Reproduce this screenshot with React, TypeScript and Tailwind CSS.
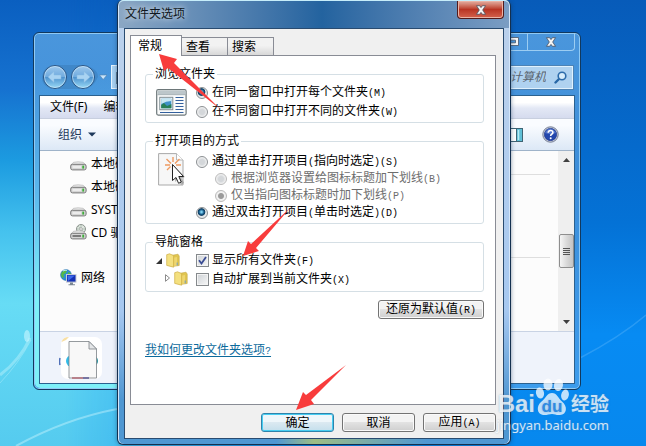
import { useState, type ReactNode } from "react"

const TABS = ["常规", "查看", "搜索"]
const DRIVES = ["本地磁盘", "本地磁盘", "SYSTEM", "CD 驱动器"]

// Latin letters and brackets take half the width of a Chinese character
function Label({ text }: { text: string }) {
  return (
    <span className="whitespace-nowrap">
      {text.split(/([()A-Z?]+)/).map((part, i) =>
        /^[()A-Z?]+$/.test(part) ? (
          <span key={i} className="font-['Liberation_Mono',monospace] text-[10px]">
            {part}
          </span>
        ) : (
          part
        )
      )}
    </span>
  )
}

function Wallpaper() {
  return (
    <svg className="absolute inset-0 size-full" viewBox="0 0 646 446" preserveAspectRatio="none" fill="none" aria-hidden="true">
      <path d="M0 375Q20 360 30 338" stroke="#d9fbff" strokeOpacity=".35" strokeWidth="3" />
      <path d="M0 383Q19 363 31 340" stroke="#d9fbff" strokeOpacity=".3" />
      <ellipse cx="27" cy="336" rx="3" ry="6" fill="#c9f6ff" fillOpacity=".6" />
      <path d="M16 446Q65 419 117 409" stroke="#d9fbff" strokeOpacity=".4" strokeWidth="2" />
      <path d="M580 358Q620 337 646 315" stroke="#8fd0ff" strokeOpacity=".25" strokeWidth="1.5" />
    </svg>
  )
}

function CloseMark() {
  return (
    <svg width="12" height="10" viewBox="0 0 12 10" aria-hidden="true">
      <path
        d="M1.5 .7H4.6L6 2.6L7.4.7H10.5L7.7 5L10.5 9.3H7.4L6 7.4L4.6 9.3H1.5L4.3 5Z"
        fill="#f5f5f5"
        stroke="#4a5060"
        strokeWidth=".8"
      />
    </svg>
  )
}

function DriveIcon({ cd }: { cd?: boolean }) {
  return (
    <svg width="17" height="17" viewBox="0 0 17 17" aria-hidden="true">
      {cd && (
        <>
          <circle cx="11" cy="5" r="4.5" fill="#dfe6df" stroke="#8d948f" />
          <path d="M11 .8V9M7 5H15M8 2L14 8" stroke="#a2b5a6" strokeWidth=".7" />
          <circle cx="11" cy="5" r="1.3" fill="#fff" stroke="#888" strokeWidth=".6" />
        </>
      )}
      <path d="M3.5 7.3Q8 6.3 13 7.3L16 10H.8Z" fill="#e9e9e9" stroke="#aaa" strokeWidth=".6" />
      <rect x=".7" y="9.3" width="15.4" height="5.6" rx="1.8" fill="#d5d5d5" stroke="#777" />
      <path d="M2.5 12H11" stroke={cd ? "#555" : "#f6f6f6"} strokeWidth="1.4" />
      <rect x="12.3" y="10.6" width="1.8" height="3" fill="#3fae3a" />
    </svg>
  )
}

function NetworkIcon() {
  return (
    <svg width="17" height="17" viewBox="0 0 17 17" aria-hidden="true">
      <circle cx="6" cy="6" r="5.4" fill="#2d8fd4" stroke="#1c66a5" strokeWidth=".6" />
      <path d="M2 3Q5 0 7 1.5L6 4L3.5 5.5L4 8L2.5 9Q0 6 2 3ZM8 3L11 4.5V7H8Z" fill="#56b944" />
      <path d="M3 2Q5 .7 7 1.3" stroke="#cdefff" fill="none" />
      <rect x="6.5" y="5.5" width="9.5" height="7.6" fill="#1431b4" stroke="#c8ccd4" />
      <path d="M7.5 6.5H15L8 12Z" fill="#3d68ea" />
      <path d="M10 13.5H13V15.3H15V16.3H8.5V15.3H10Z" fill="#7c8794" />
    </svg>
  )
}

function LayoutIcon() {
  return (
    <svg width="31" height="27" viewBox="0 0 31 27" aria-hidden="true">
      <rect x=".7" y=".7" width="29.4" height="25.4" rx="1.5" fill="#fbfcfc" stroke="#6d7779" strokeWidth="1.2" />
      <rect x="1.5" y="1.5" width="28" height="4" fill="#bcc6ca" />
      <path d="M1.5 5.7H29.5" stroke="#8d999e" strokeWidth=".7" />
      <rect x="3.8" y="8.3" width="13" height="12.4" fill="#fff" stroke="#7c8b91" />
      <rect x="5.2" y="9.7" width="10.2" height="9.6" fill="#3f91c8" />
      <path d="M5.2 9.7H15.4V12Q10 12 5.2 15Z" fill="#c7e7f2" />
      <path d="M5.2 16L8 14L11 17L15.4 15V19.3H5.2Z" fill="#277f55" />
      <path d="M19.5 8.5H27.5M19.5 11.5H27.5M19.5 14.5H27.5M19.5 17.5H27.5M19.5 20.5H27.5M4 23.5H27.5" stroke="#33609d" />
    </svg>
  )
}

function ClickIcon() {
  return (
    <svg width="28" height="33" viewBox="0 0 28 33" aria-hidden="true">
      <path d="M.6.6H18.5L25 7V32H.6Z" fill="#f7f7f7" stroke="#a9a9a9" />
      <path d="M18.5.6V7H25" fill="#fff" stroke="#b7b7b7" />
      <g stroke="#ee9b62" strokeWidth="1.4">
        <path d="M15 4V9M8.5 6L13 10.5M21.5 6L17 10.5M7 12H12M18 12H23M9 17L12.5 13.5" />
      </g>
      <path d="M17 14L27 24L23.5 25L26 30L23 32L20 26L17 29Z" fill="#777" fillOpacity=".5" />
      <path d="M14.5 11.5V27.5L18 24.5L20.6 30.3L23.3 29L20.8 23.5H25.5Z" fill="#fff" stroke="#222" />
    </svg>
  )
}

function FolderIcon() {
  return (
    <svg width="14" height="15" viewBox="0 0 14 15" aria-hidden="true">
      <path d="M5 2.5L12 1.2L13.2 3V12.5L6 13.5Z" fill="#e0c550" stroke="#c5a843" strokeWidth=".6" />
      <path d="M.7 1.7L3.5.8L7.6 2.6V14.2L.7 12.4Z" fill="#f4e07f" stroke="#cfae43" strokeWidth=".7" />
      <path d="M8.2 4.5L11 4V12.4L8.2 13Z" fill="#eed670" />
      <path d="M11.2 9.5V12.3" stroke="#6f9fc4" />
    </svg>
  )
}

function Group({ title, icon, className, children }: { title: string; icon: ReactNode; className: string; children: ReactNode }) {
  return (
    <fieldset className="min-w-0 rounded-[3px] border border-[#d5dfe5] pl-[10px]">
      <legend className="-ml-[3px] h-4 px-[2px] leading-4">{title}</legend>
      <div className={`flex ${className}`}>
        <div className="w-10 shrink-0">{icon}</div>
        <div className="min-w-0 flex-1">{children}</div>
      </div>
    </fieldset>
  )
}

type RadioProps = { name: string; text: string; checked: boolean; onChange?: () => void; disabled?: boolean; className: string }

function Radio({ name, text, checked, onChange, disabled, className }: RadioProps) {
  return (
    <label className={`flex items-center gap-1 ${className}`}>
      <input
        type="radio"
        name={name}
        checked={checked}
        disabled={disabled}
        onChange={onChange}
        className="size-3 shrink-0 appearance-none rounded-full border border-[#8b8f92] bg-[radial-gradient(circle,#d4d7da_35%,#f8f8f8_75%)] checked:bg-[radial-gradient(circle_at_45%_40%,#7fd0f2_8%,#155a88_30%,#123f63_42%,#e4e8ea_52%)] disabled:border-[#b9b9b9] disabled:checked:bg-[radial-gradient(circle,#9a9a9a_35%,#f0f0f0_50%)]"
      />
      <Label text={text} />
    </label>
  )
}

function Checkbox({ text, checked, onChange }: { text: string; checked: boolean; onChange: () => void }) {
  return (
    <label className="flex h-[19px] items-center gap-[3px]">
      <span className="grid shrink-0 place-items-center *:[grid-area:1/1]">
        <input
          type="checkbox"
          checked={checked}
          onChange={onChange}
          className="size-[13px] appearance-none border border-[#85898c] bg-linear-to-br from-[#cdd1d5] to-[#f8f8f8] shadow-[inset_0_0_0_1px_#f4f4f4]"
        />
        {checked && (
          <svg width="9" height="9" viewBox="0 0 9 9" fill="none" className="pointer-events-none" aria-hidden="true">
            <path d="M1 4.2L3.5 7.5L8 1" stroke="#3a4c94" strokeWidth="1.8" />
          </svg>
        )}
      </span>
      <Label text={text} />
    </label>
  )
}

function DialogButton({ text, primary, className }: { text: string; primary?: boolean; className: string }) {
  return (
    <button
      type="button"
      className={`flex h-[19px] items-center justify-center rounded-[3px] border bg-linear-to-b ${
        primary
          ? "border-[#2f83ab] from-[#eef6fa] from-45% via-[#dbe9f1] via-50% to-[#c4dfec] shadow-[inset_0_0_0_1px_#46cdf2]"
          : "border-[#737373] from-[#f3f3f3] from-45% via-[#e2e2e2] via-50% to-[#cfcfcf] shadow-[inset_0_0_0_1px_#fafafa]"
      } ${className}`}
    >
      <Label text={text} />
    </button>
  )
}

function ExplorerWindow() {
  return (
    <section
      aria-label="计算机"
      className="absolute top-8 right-[65px] left-[33px] rounded-[6px] border border-[#12395e] bg-linear-to-b from-[#4a96dc] via-[#3d8ed9] via-40% to-[#3d9cec] pb-[5px] shadow-[inset_0_0_0_1px_#8fcaf5]"
    >
      <div className="absolute inset-y-px left-px w-[90px] rounded-[5px] bg-linear-to-b from-transparent from-10% via-[#5cb8ec] via-45% to-[#7df0f8] to-75%" />
      <div className="relative">
        <div className="mr-[5px] flex h-[18px] justify-end text-white">
          <button type="button" aria-label="最大化" className="flex w-12 items-center justify-end rounded-bl border-b border-l border-[#9ccdf2] pr-2">
            <svg width="12" height="9" viewBox="0 0 12 9" aria-hidden="true">
              <path d="M.5.5H11.5V8.5H.5ZM3.5 3.2V5.8H8.5V3.2Z" fill="#f5f5f5" fillRule="evenodd" stroke="#455468" strokeWidth=".8" />
            </svg>
          </button>
          <button type="button" aria-label="关闭" className="grid w-12 place-items-center rounded-br border-r border-b border-l border-[#9ccdf2]">
            <CloseMark />
          </button>
        </div>
        <div className="mx-[7px] mt-[13px] mb-[5px] flex h-[26px] items-center">
          <svg width="66" height="26" viewBox="0 0 66 26" className="shrink-0" aria-hidden="true">
            <defs>
              <linearGradient id="nav" x1="0" y1="0" x2="0" y2="1">
                <stop offset="0" stopColor="#9fc9ed" />
                <stop offset=".48" stopColor="#70abdf" />
                <stop offset=".52" stopColor="#4e93cf" />
                <stop offset="1" stopColor="#9cdcf7" />
              </linearGradient>
            </defs>
            <path d="M14 1H42Q57 4 57 13Q52 25 42 25H14Q1 24 1 13Q2 2 14 1" fill="#356fa6" fillOpacity=".35" />
            {[14, 42].map((cx) => (
              <g key={cx}>
                <circle cx={cx} cy="13" r="11.5" fill="url(#nav)" stroke="#2a5585" />
                <circle cx={cx} cy="13" r="10.5" fill="none" stroke="#d5edfb" strokeOpacity=".6" />
              </g>
            ))}
            <path d="M7 13L13 7.5V11H20V15H13V18.5ZM49 13L43 7.5V11H36V15H43V18.5Z" fill="#a9d3f2" stroke="#86b8e2" strokeWidth=".5" />
            <path d="M58.5 11H66L62.2 15.5Z" fill="#c9e5fa" stroke="#527fac" strokeWidth=".6" />
          </svg>
          <div className="ml-1 h-6 flex-1 border border-[#e6f3fc] bg-[#a9d2f2] px-1 py-[6px]">
            <div className="h-3 w-3 border border-[#657f90] bg-[#cfdcaa]" />
          </div>
          <div className="ml-2 flex h-[23px] w-[130px] items-center gap-2 border border-[#e0f1fd] bg-[#afd2f0] pr-[5px] shadow-[0_0_0_1px_#4d83b5]">
            <input
              type="text"
              aria-label="搜索 计算机"
              placeholder="搜索 计算机"
              className="min-w-0 flex-1 bg-transparent text-right text-xs text-[#53636f] italic outline-none placeholder:text-[#5b6670]"
            />
            <svg width="13" height="13" viewBox="0 0 13 13" fill="none" className="shrink-0" aria-hidden="true">
              <path d="M5.5 7.5L1.5 11.5" stroke="#2767a6" strokeWidth="2.4" strokeLinecap="round" />
              <circle cx="8" cy="5" r="3.8" fill="#d8edfb" stroke="#2d6cab" strokeWidth="1.6" />
            </svg>
          </div>
        </div>
        <div className="mx-[5px] border border-[#2b618f] bg-[#fcfcfc]">
          <div className="flex h-[22px] items-center gap-4 bg-linear-to-b from-white from-30% via-[#e3e8f5] via-55% to-[#d5dbee] pl-[10px]">
            <button type="button">文件(F)</button>
            <button type="button">编辑(E)</button>
          </div>
          <div className="flex h-[33px] items-center border-y border-t-[#c8cfdf] border-b-[#9fb3c9] bg-linear-to-b from-[#fafcff] from-20% to-[#dce8f6] pr-[15px] pl-[18px] text-[#1e395b]">
            <button type="button" className="flex items-center gap-[6px]">
              组织
              <svg width="8" height="5" viewBox="0 0 8 5" aria-hidden="true">
                <path d="M0 .5H8L4 4.5Z" fill="#1e395b" />
              </svg>
            </button>
            <svg width="20" height="14" viewBox="0 0 20 14" className="mr-[19px] ml-auto" aria-hidden="true">
              <rect x=".5" y=".5" width="19" height="13" fill="#fff" stroke="#3f6474" />
              <rect x="13.5" y=".5" width="6" height="13" fill="#5fbfd6" stroke="#3f6474" />
              <path d="M15.5 2V12" stroke="#b7ecf4" strokeWidth="1.5" />
            </svg>
            <svg width="17" height="17" viewBox="0 0 17 17" aria-hidden="true">
              <circle cx="8.5" cy="8.5" r="7.7" fill="#dadde5" stroke="#717b93" />
              <circle cx="8.5" cy="8.5" r="6.2" fill="#2347ad" stroke="#182f7d" strokeWidth=".6" />
              <path d="M3 7Q5 2 8.5 2.5T14 7Q8 9 3 7Z" fill="#6f91df" fillOpacity=".6" />
              <path d="M6.2 6.8Q6.3 4.5 8.6 4.5T10.9 6.5Q10.9 7.6 9.6 8.3Q8.7 8.8 8.7 9.9" fill="none" stroke="#fff" strokeWidth="1.6" />
              <circle cx="8.7" cy="12.2" r="1" fill="#fff" />
            </svg>
          </div>
          <div className="flex h-[180px]">
            <ul className="w-40 shrink-0 pt-px">
              {DRIVES.map((name, i) => (
                <li key={i} className="flex h-[23px] items-center gap-1 pl-[30px] whitespace-nowrap">
                  <DriveIcon cd={name.startsWith("CD")} />
                  {name}
                </li>
              ))}
              <li className="mt-[22px] flex h-[23px] items-center gap-1 pl-5">
                <NetworkIcon />
                网络
              </li>
            </ul>
            <div className="mr-2 flex-1">
              <div className="mt-[23px] border-t border-[#dedede]" />
              <div className="mt-[82px] border-t border-[#dedede]" />
            </div>
            <div className="flex w-4 flex-col items-center bg-[#efefef] py-[7px]">
              <svg width="7" height="4" viewBox="0 0 7 4" aria-hidden="true">
                <path d="M3.5 0L7 4H0Z" fill="#3f3f3f" />
              </svg>
              <div className="mt-[72px] flex h-[34px] w-[15px] flex-col items-center justify-center gap-px rounded-[2px] border border-[#8e8e8e] bg-linear-to-r from-[#f6f6f6] via-[#dadada] to-[#c3c3c3]">
                <div className="h-px w-[7px] bg-[#555]" />
                <div className="h-px w-[7px] bg-[#555]" />
                <div className="h-px w-[7px] bg-[#555]" />
                <div className="h-px w-[7px] bg-[#555]" />
              </div>
              <svg width="7" height="4" viewBox="0 0 7 4" className="mt-auto" aria-hidden="true">
                <path d="M3.5 4L0 0H7Z" fill="#3f3f3f" />
              </svg>
            </div>
          </div>
          <div className="h-[52px] border-t border-[#c9d3e4] bg-[#eff3fb] pt-1 pl-[19px]">
            <svg width="46" height="44" viewBox="0 0 46 44" aria-hidden="true">
              <rect x="2" y="1" width="41" height="42" rx="7" fill="#fff" />
              <path d="M2.5 6Q4 1 10 1L7 4Z" fill="#f8dfa2" />
              <path d="M1 22Q0 26 1 29" stroke="#5070b8" strokeWidth="1.5" fill="none" />
              <circle cx="13" cy="25" r="6" fill="#2fbce9" />
              <circle cx="33" cy="25" r="6" fill="#258f9d" />
              <path d="M10 5.5H30L37.5 13V42H10Z" fill="#f8f8f8" stroke="#7b8186" strokeWidth=".8" />
              <path d="M30 5.5V13H37.5Z" fill="#e4e6e8" stroke="#7b8186" strokeWidth=".8" />
              <path d="M13 42H30" stroke="#a73848" />
              <path d="M24 42H30" stroke="#3568b8" />
            </svg>
          </div>
        </div>
      </div>
    </section>
  )
}

function FolderOptionsDialog() {
  const [tab, setTab] = useState(0)
  const [browse, setBrowse] = useState(0)
  const [click, setClick] = useState(1)
  const [showAll, setShowAll] = useState(true)
  const [expand, setExpand] = useState(false)

  return (
    <section
      role="dialog"
      aria-label="文件夹选项"
      className="absolute top-0 right-[135px] left-[117px] rounded-[6px] border-x border-b border-[#14304f] bg-linear-to-b from-[#b9d0ec] from-15% via-[#a6c8f0] via-70% to-[#4f97d2] to-90% px-[6px] pb-[5px] shadow-[inset_0_1px_0_#c9e8f5,inset_1px_0_0_#d4e6fa,inset_-1px_0_0_#d4e6fa,0_0_4px_#10305080]"
    >
      {/* Wallpaper colours showing through the glass under the buttons */}
      <div className="absolute inset-x-2 bottom-0 h-[5px] bg-linear-to-r from-transparent from-40% via-[#9dbd84] via-50% to-transparent to-80%" />
      <div className="-mx-[5px] flex h-7 items-start justify-between rounded-t-[5px] border-t border-[#c6edfa] bg-linear-to-r from-[#8ba7c4] via-[#23639f] via-52% to-[#7b9dc3] pr-[5px] pl-[6px]">
        <h1 className="text-xs leading-[26px] text-[#101820] [text-shadow:0_0_6px_#fff]">文件夹选项</h1>
        <button
          type="button"
          aria-label="关闭"
          className="grid h-[18px] w-[47px] place-items-center rounded-b-[4px] border border-t-0 border-[#521b1b] bg-linear-to-b from-[#dc9a8c] from-10% via-[#b83423] via-50% to-[#d4614c] shadow-[inset_0_0_0_1px_#eab3a5]"
        >
          <CloseMark />
        </button>
      </div>
      <div className="relative border border-[#294b70] bg-[#f0f0f0] pt-[6px] pr-[7px] pb-[6px] pl-[5px]">
        <div role="tablist" className="relative -mb-px flex items-end">
          {TABS.map((name, i) => (
            <button
              key={name}
              type="button"
              role="tab"
              aria-selected={tab === i}
              onClick={() => setTab(i)}
              className={
                tab === i
                  ? "h-[21px] w-[52px] border border-b-0 border-[#898c95] bg-white pl-[7px] text-left"
                  : "mb-px h-[18px] w-[46px] border border-b-0 border-l-0 border-[#898c95] bg-linear-to-b from-[#f2f2f2] from-45% to-[#d8d8d8] pt-px pl-[4px] text-left leading-4"
              }
            >
              {name}
            </button>
          ))}
        </div>
        <div className="border border-[#898c95] bg-white pt-[10px] pr-[11px] pb-[46px] pl-[14px]">
          <div className="flex flex-col gap-[10px]">
            <Group title="浏览文件夹" className="pt-px pb-px" icon={<div className="pt-[6px]"><LayoutIcon /></div>}>
              {["在同一窗口中打开每个文件夹(M)", "在不同窗口中打开不同的文件夹(W)"].map((text, i) => (
                <Radio key={text} name="browse" text={text} checked={browse === i} onChange={() => setBrowse(i)} className="h-[19px]" />
              ))}
            </Group>
            <Group title="打开项目的方式" className="pt-1 pb-[2px]" icon={<div className="pl-[2px]"><ClickIcon /></div>}>
              <Radio name="click" text="通过单击打开项目(指向时选定)(S)" checked={click === 0} onChange={() => setClick(0)} className="h-[17px]" />
              <Radio name="underline" text="根据浏览器设置给图标标题加下划线(B)" checked={false} disabled className="ml-[19px] h-[17px] text-[#6d6d6d]" />
              <Radio name="underline" text="仅当指向图标标题时加下划线(P)" checked disabled className="ml-[19px] h-[17px] text-[#6d6d6d]" />
              <Radio name="click" text="通过双击打开项目(单击时选定)(D)" checked={click === 1} onChange={() => setClick(1)} className="h-[17px]" />
            </Group>
            <Group
              title="导航窗格"
              className="pt-px pb-[2px]"
              icon={
                <>
                  <div className="flex h-[19px] items-center gap-1">
                    <svg width="6" height="6" viewBox="0 0 6 6" aria-hidden="true">
                      <path d="M6 0V6H0Z" fill="#333" />
                    </svg>
                    <FolderIcon />
                  </div>
                  <div className="flex h-4 items-center gap-1 pl-[9px]">
                    <svg width="5" height="8" viewBox="0 0 5 8" aria-hidden="true">
                      <path d="M.5.7V7.3L4.5 4Z" fill="#fff" stroke="#8b8b8b" />
                    </svg>
                    <FolderIcon />
                  </div>
                </>
              }
            >
              <Checkbox text="显示所有文件夹(F)" checked={showAll} onChange={() => setShowAll(!showAll)} />
              <Checkbox text="自动扩展到当前文件夹(X)" checked={expand} onChange={() => setExpand(!expand)} />
            </Group>
          </div>
          <div className="mt-2 flex justify-end">
            <DialogButton text="还原为默认值(R)" className="w-[106px]" />
          </div>
          <a href="#help" className="mt-[23px] block h-4 w-fit leading-4 text-[#0b6a9c] underline underline-offset-2">
            <Label text="我如何更改文件夹选项?" />
          </a>
        </div>
        <div className="flex justify-end gap-2 pt-2">
          <DialogButton text="确定" primary className="w-[73px]" />
          <DialogButton text="取消" className="w-[73px]" />
          <DialogButton text="应用(A)" className="w-[73px]" />
        </div>
      </div>
    </section>
  )
}

function Watermark() {
  return (
    <div className="pointer-events-none absolute right-[37px] bottom-[12px] text-white/75 [text-shadow:0_0_2px_#5f86a688]">
      <div className="flex items-end justify-end">
        <span className="font-['Liberation_Sans',sans-serif] text-[24px] leading-6 font-bold">Bai</span>
        <div className="relative">
          <svg width="34" height="38" viewBox="0 0 34 38" fill="currentColor" aria-hidden="true">
            <ellipse cx="5" cy="15" rx="4" ry="5.5" transform="rotate(-12 5 15)" />
            <ellipse cx="13" cy="6.5" rx="4.5" ry="6" />
            <ellipse cx="23.5" cy="7" rx="4.5" ry="6" transform="rotate(10 23.5 7)" />
            <ellipse cx="30" cy="17" rx="3.8" ry="5.5" transform="rotate(12 30 17)" />
            <path d="M17 15C22 15 23 20 27 23.5C33 28.5 32 36.5 25 37C21 37.3 20 36 17 36C14 36 12 37.3 8 37C2 36 1 28.5 6 24C11 20 12 15 17 15Z" />
          </svg>
          <span className="absolute inset-x-0 bottom-0 text-center font-['Liberation_Sans',sans-serif] text-[17px] leading-[19px] font-bold text-[#2f8be2]">du</span>
        </div>
        <span className="ml-[2px] text-[19px] leading-6 font-bold">经验</span>
      </div>
      <div className="text-right font-['Noto_Sans',sans-serif] text-[13px] leading-[18px] text-white/80">jingyan.baidu.com</div>
    </div>
  )
}

export default function App() {
  return (
    <main className="relative min-h-screen overflow-hidden bg-[linear-gradient(to_bottom,#075bb9,#0472d6_50%,#078bf3_75%,#0788ee)] font-['Noto_Sans','Noto_Sans_CJK_SC',sans-serif] text-xs text-black">
      <div className="absolute inset-y-0 left-0 w-1/2 bg-[linear-gradient(to_bottom,#0a5fc0,#1672d0_20%,#1c9be0_36%,#45c2ee_52%,#67dcf5_68%,#55cbef)] mask-r-from-20% mask-r-to-100%" />
      <Wallpaper />
      <ExplorerWindow />
      <FolderOptionsDialog />
      <Watermark />
      {/* Pointers to the steps */}
      <svg width="646" height="446" viewBox="0 0 646 446" fill="#f83c3c" className="pointer-events-none absolute top-0 left-0" aria-hidden="true">
        <path d="M159 54L177 59L174 63L220 109L168 68L164 71Z" />
        <path d="M243 256L248 241L251 244L290 208L256 248L259 251Z" />
        <path d="M296 410L303 392L306 395L346 365L311 400L314 404Z" />
      </svg>
    </main>
  )
}
